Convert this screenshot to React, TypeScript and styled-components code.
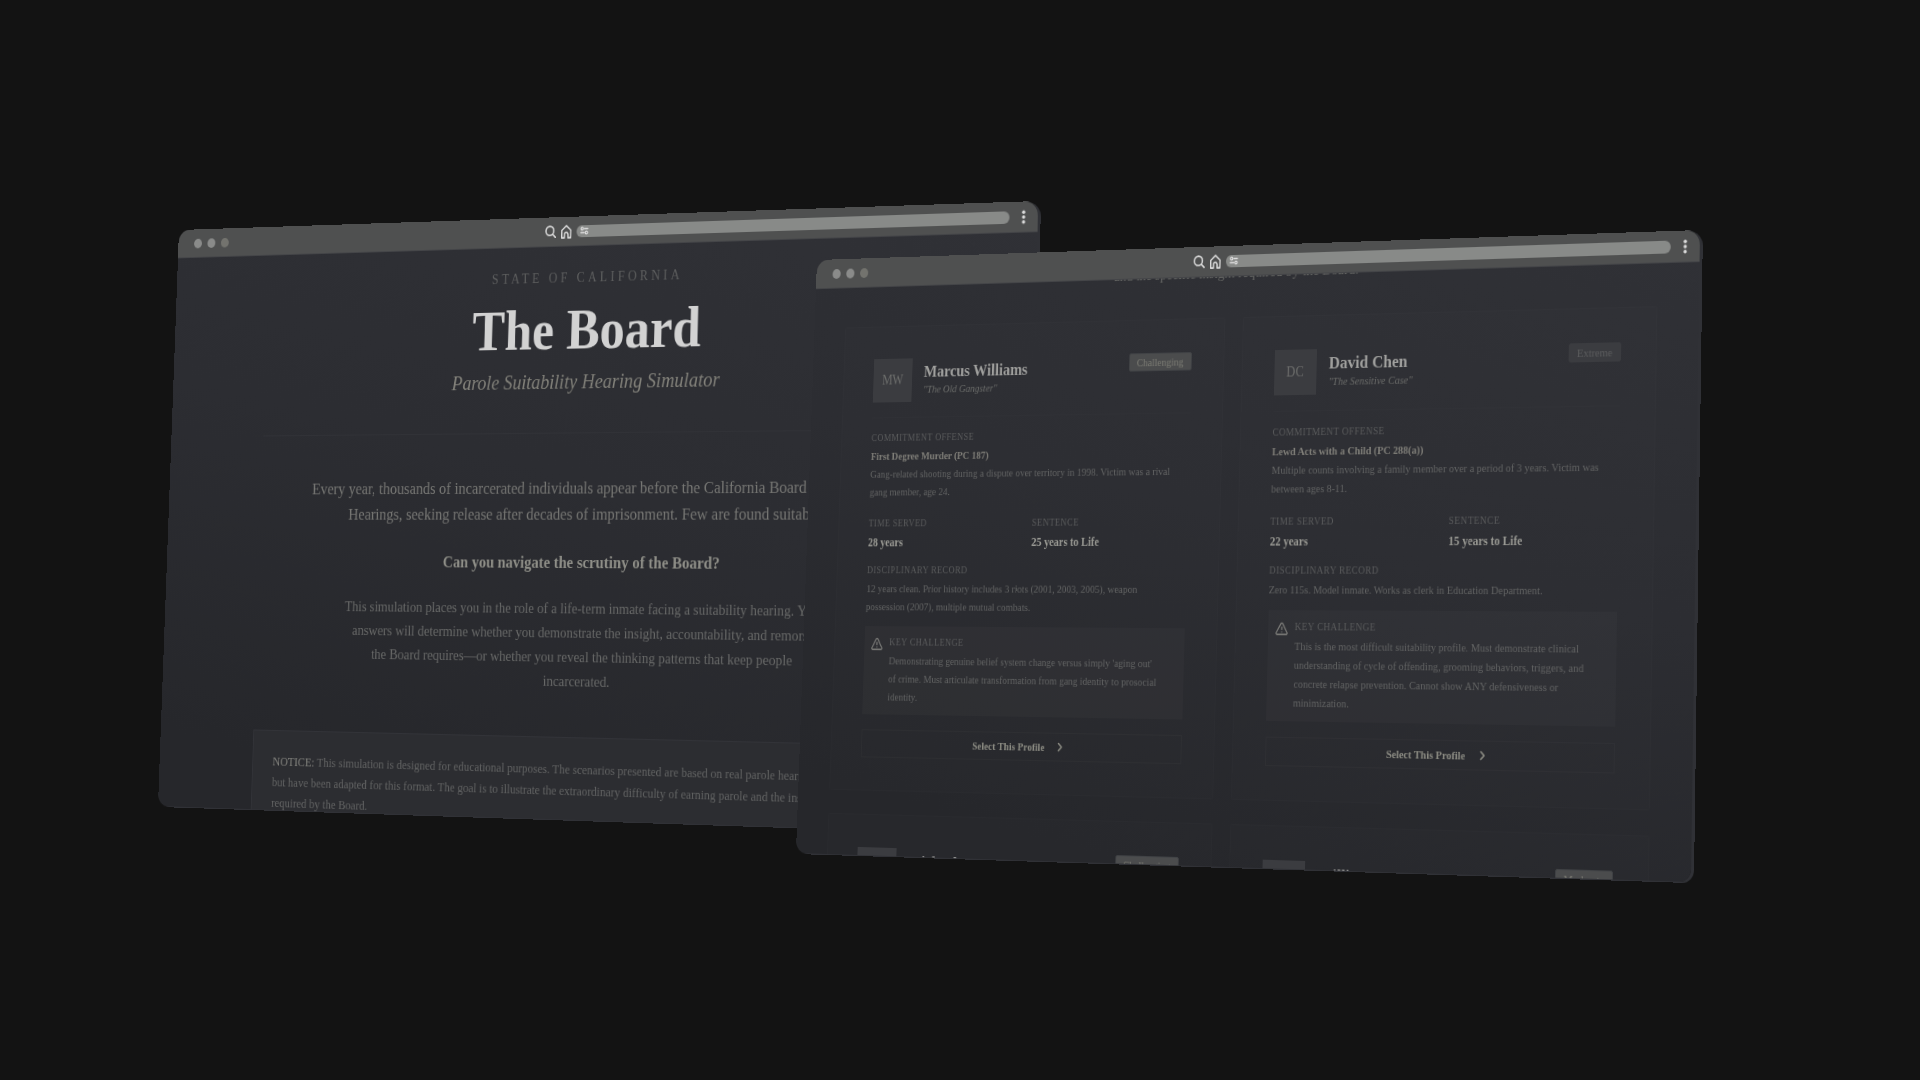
import React from "react";
import styled, { createGlobalStyle } from "styled-components";

const GlobalStyle = createGlobalStyle`
  *, *::before, *::after { box-sizing: border-box; }
  html, body { margin: 0; background: #131313; }
  body { font-family: "Liberation Serif", "Times New Roman", serif; overflow: hidden; }
  h1, h2, h3, p, dl, dt, dd { margin: 0; }
  button, input { font-family: inherit; }
`;

type Point = [number, number];
type Quad = [Point, Point, Point, Point];

const WINDOW_WIDTH = 1000;
const WINDOW_HEIGHT = 600;

/* Perspective matrix that lays a w x h plane on four corners: TL, TR, BR, BL. */
function project(w: number, h: number, [p0, p1, p2, p3]: Quad): string {
  const dx1 = p1[0] - p2[0];
  const dx2 = p3[0] - p2[0];
  const dx3 = p0[0] - p1[0] + p2[0] - p3[0];
  const dy1 = p1[1] - p2[1];
  const dy2 = p3[1] - p2[1];
  const dy3 = p0[1] - p1[1] + p2[1] - p3[1];
  const det = dx1 * dy2 - dx2 * dy1;
  const g = (dx3 * dy2 - dx2 * dy3) / det;
  const k = (dx1 * dy3 - dx3 * dy1) / det;
  const a = p1[0] - p0[0] + g * p1[0];
  const b = p3[0] - p0[0] + k * p3[0];
  const d = p1[1] - p0[1] + g * p1[1];
  const e = p3[1] - p0[1] + k * p3[1];
  const m = [
    a / w, d / w, 0, g / w,
    b / h, e / h, 0, k / h,
    0, 0, 1, 0,
    p0[0], p0[1], 0, 1,
  ];
  return `matrix3d(${m.map((n) => n.toFixed(9)).join(",")})`;
}

const Desk = styled.main`
  min-height: 100vh;
  display: grid;
  place-items: center;
  background: #131313;
`;

const Stage = styled.div`
  position: relative;
  width: 1604px;
  height: 680px;
`;

const Frame = styled.section<{ $corners: Quad }>`
  position: absolute;
  top: 0;
  left: 0;
  width: ${WINDOW_WIDTH}px;
  height: ${WINDOW_HEIGHT}px;
  display: flex;
  flex-direction: column;
  overflow: hidden;
  border-radius: 14px 14px 12px 12px;
  background: linear-gradient(192deg, #303136 0%, #2c2d32 45%, #26272b 90%);
  box-shadow: 3px 1px 0 #303136;
  transform-origin: 0 0;
  transform: ${(p) => project(WINDOW_WIDTH, WINDOW_HEIGHT, p.$corners)};
`;

const Chrome = styled.header`
  flex: none;
  height: 30px;
  display: flex;
  align-items: center;
  gap: 5px;
  padding: 0 10px 0 20px;
  background: #4f5050;
  border-bottom: 1px solid #444548;
  position: relative;
`;

const Lights = styled.div`
  flex: 1;
  display: flex;
  gap: 7px;
`;

const Light = styled.span<{ $dim?: boolean }>`
  width: 10px;
  height: 10px;
  border-radius: 50%;
  background: ${(p) => (p.$dim ? "#73736e" : "#8a8b8a")};
`;

const IconButton = styled.button<{ $width: number }>`
  width: ${(p) => p.$width}px;
  height: 20px;
  display: grid;
  place-items: center;
  padding: 0;
  border: 0;
  background: none;
  color: #dcdcdc;
`;

const Address = styled.label`
  flex: 0 0 483px;
  height: 12px;
  display: flex;
  align-items: center;
  gap: 4px;
  padding: 0 4px;
  margin-right: 5px;
  border-radius: 6px;
  background: #888a88;
  color: #dcdcdc;
`;

const AddressInput = styled.input`
  flex: 1;
  min-width: 0;
  height: 12px;
  padding: 0;
  border: 0;
  outline: 0;
  background: none;
  color: #dcdcdc;
  font-size: 10px;
`;

const Viewport = styled.div`
  flex: 1;
  min-height: 0;
  overflow: hidden;
`;

/* ---------- Intro page ---------- */

const Intro = styled.div`
  width: 768px;
  margin: 0 auto;
  padding-top: 22px;
  text-align: center;
`;

const Masthead = styled.div`
  padding-bottom: 39px;
  border-bottom: 1px solid #313237;
`;

const Eyebrow = styled.p`
  font-size: 14px;
  line-height: 20px;
  letter-spacing: 0.27em;
  color: #5e5f5f;
`;

const Title = styled.h1`
  margin-top: 10px;
  font-size: 58px;
  line-height: 64px;
  font-weight: 700;
  color: #d2d2d2;
`;

const Subtitle = styled.p`
  margin-top: 8px;
  font-size: 21px;
  line-height: 24px;
  font-style: italic;
  color: #82817a;
`;

const Lead = styled.p`
  margin-top: 42px;
  font-size: 17px;
  line-height: 26px;
  color: #777774;
`;

const Question = styled.p`
  margin-top: 22px;
  font-size: 17px;
  line-height: 26px;
  font-weight: 700;
  color: #8f8f88;
`;

const Body = styled.p`
  margin-top: 20px;
  font-size: 15px;
  line-height: 24px;
  color: #686968;
`;

const Notice = styled.aside`
  margin-top: 43px;
  padding: 20px 24px;
  border: 1px solid #323338;
  background: #2c2d31;
  text-align: left;
  white-space: nowrap;
  font-size: 13px;
  line-height: 21px;
  color: #626363;
`;

const NoticeTag = styled.strong`
  font-weight: 400;
  color: #84847f;
`;

/* ---------- Profiles page ---------- */

const Profiles = styled.div`
  padding: 0 43px 0 38px;
`;

const Caption = styled.p`
  margin-top: -14px;
  font-size: 15px;
  line-height: 20px;
  text-align: center;
  color: #686966;
`;

const Grid = styled.div`
  margin-top: 34px;
  display: grid;
  grid-template-columns: 1fr 1fr;
  gap: 23px 20px;
`;

const Card = styled.article`
  padding: 32px 36px;
  border: 1px solid rgba(255, 255, 255, 0.012);
  border-radius: 2px;
  background: rgba(255, 255, 255, 0.008);
  font-size: 11px;
  line-height: 18px;
  color: #626363;
`;

const CardHead = styled.div`
  display: flex;
  align-items: flex-start;
  gap: 14px;
  padding-bottom: 15px;
  margin-bottom: 13px;
  border-bottom: 1px solid rgba(255, 255, 255, 0.01);
`;

const Avatar = styled.div`
  width: 47px;
  height: 44px;
  display: grid;
  place-items: center;
  background: #3b3c40;
  font-size: 14px;
  color: #6c6d6b;
`;

const Identity = styled.div`
  flex: 1;
  padding-top: 4px;
`;

const Name = styled.h2`
  font-size: 17px;
  line-height: 20px;
  font-weight: 700;
  color: #a0a09e;
`;

const Alias = styled.p`
  font-size: 11px;
  line-height: 14px;
  font-style: italic;
  color: #6a6b69;
`;

const Badge = styled.span<{ $quiet?: boolean }>`
  padding: 0 8px;
  border: 1px solid ${(p) => (p.$quiet ? "#3b3c40" : "#414346")};
  border-radius: 2px;
  background: ${(p) => (p.$quiet ? "#3b3c40" : "#4b4c4d")};
  font-size: 11px;
  line-height: 16px;
  color: ${(p) => (p.$quiet ? "#5c5d5e" : "#7c7c74")};
`;

const Label = styled.h3`
  font-size: 10px;
  line-height: 14px;
  font-weight: 400;
  letter-spacing: 0.05em;
  text-transform: uppercase;
  color: #5a5b5c;
`;

const Offense = styled.p`
  margin-top: 2px;
  font-weight: 700;
  color: #807f79;
`;

const Facts = styled.dl`
  margin: 16px 0 12px;
  display: grid;
  grid-template-columns: 1fr 1fr;
  gap: 16px;
`;

const Value = styled.dd`
  margin-top: 3px;
  font-size: 12px;
  font-weight: 700;
  color: #9a9a94;
`;

const Text = styled.p<{ $spaced?: boolean }>`
  margin-top: ${(p) => (p.$spaced ? 2 : 0)}px;
  white-space: nowrap;
`;

const Challenge = styled.div`
  margin-top: 11px;
  padding: 9px 8px;
  display: flex;
  gap: 8px;
  background: rgba(255, 255, 255, 0.024);
`;

const WarnSlot = styled.span`
  display: flex;
  padding-top: 2px;
  color: #7c7c79;
`;

const SelectButton = styled.button`
  width: 100%;
  height: 28px;
  margin-top: 15px;
  display: flex;
  align-items: center;
  justify-content: center;
  gap: 12px;
  padding: 0;
  border: 1px solid rgba(255, 255, 255, 0.025);
  background: none;
  font-size: 11px;
  font-weight: 700;
  color: #8d8d84;
`;

/* ---------- Icons ---------- */

const SearchIcon = () => (
  <svg width="13" height="13" viewBox="0 0 24 24" fill="none" stroke="currentColor" strokeWidth="3" strokeLinecap="round">
    <circle cx="10.5" cy="10.5" r="8.5" />
    <path d="M17 17l5.5 5.5" />
  </svg>
);

const HomeIcon = () => (
  <svg width="14" height="14" viewBox="0 0 24 24" fill="none" stroke="currentColor" strokeWidth="2.6" strokeLinejoin="round">
    <path d="M3 9.500L12 1.500l9 8v13h-5.500v-6a3.500 3.500 0 0 0-7 0v6H3z" />
  </svg>
);

const TuneIcon = () => (
  <svg width="10" height="9" viewBox="0 0 20 18" fill="none" stroke="currentColor" strokeWidth="2.600" strokeLinecap="round">
    <circle cx="5" cy="5" r="2.700" />
    <path d="M10 5h8M2 13h8" />
    <circle cx="15" cy="13" r="2.700" />
  </svg>
);

const MenuIcon = () => (
  <svg width="4" height="14" viewBox="0 0 4 14" fill="currentColor">
    <circle cx="2" cy="2.200" r="1.700" />
    <circle cx="2" cy="7" r="1.700" />
    <circle cx="2" cy="11.800" r="1.700" />
  </svg>
);

const WarnIcon = () => (
  <svg width="14" height="14" viewBox="0 0 24 24" fill="none" stroke="currentColor" strokeWidth="2.200" strokeLinecap="round" strokeLinejoin="round">
    <path d="M10.300 3.200L1.800 18a2 2 0 0 0 1.700 3h17a2 2 0 0 0 1.700-3L13.700 3.200a2 2 0 0 0-3.400 0z" />
    <path d="M12 9v4M12 17h.01" />
  </svg>
);

const ChevronIcon = () => (
  <svg width="12" height="12" viewBox="0 0 24 24" fill="none" stroke="currentColor" strokeWidth="3.200" strokeLinecap="round" strokeLinejoin="round">
    <path d="M9 5l7 7-7 7" />
  </svg>
);

/* ---------- Browser window ---------- */

function BrowserWindow({ corners, label, children }: { corners: Quad; label: string; children: React.ReactNode }) {
  return (
    <Frame $corners={corners} aria-label={label}>
      <Chrome>
        <Lights>
          <Light />
          <Light />
          <Light $dim />
        </Lights>
        <IconButton type="button" $width={13} aria-label="Search"><SearchIcon /></IconButton>
        <IconButton type="button" $width={14} aria-label="Home"><HomeIcon /></IconButton>
        <Address>
          <TuneIcon />
          <AddressInput type="text" aria-label="Address" />
        </Address>
        <IconButton type="button" $width={10} aria-label="Menu"><MenuIcon /></IconButton>
      </Chrome>
      <Viewport>{children}</Viewport>
    </Frame>
  );
}

interface Profile {
  initials: string;
  name: string;
  alias: string;
  level: string;
  quiet?: boolean;
  offense: string;
  summary: string[];
  served: string;
  sentence: string;
  record: string[];
  challenge: string[];
}

const profiles: Profile[] = [
  {
    initials: "MW",
    name: "Marcus Williams",
    alias: "\"The Old Gangster\"",
    level: "Challenging",
    offense: "First Degree Murder (PC 187)",
    summary: ["Gang-related shooting during a dispute over territory in 1998. Victim was a rival", "gang member, age 24."],
    served: "28 years",
    sentence: "25 years to Life",
    record: ["12 years clean. Prior history includes 3 riots (2001, 2003, 2005), weapon", "possession (2007), multiple mutual combats."],
    challenge: ["Demonstrating genuine belief system change versus simply 'aging out'", "of crime. Must articulate transformation from gang identity to prosocial", "identity."],
  },
  {
    initials: "DC",
    name: "David Chen",
    alias: "\"The Sensitive Case\"",
    level: "Extreme",
    quiet: true,
    offense: "Lewd Acts with a Child (PC 288(a))",
    summary: ["Multiple counts involving a family member over a period of 3 years. Victim was", "between ages 8-11."],
    served: "22 years",
    sentence: "15 years to Life",
    record: ["Zero 115s. Model inmate. Works as clerk in Education Department."],
    challenge: ["This is the most difficult suitability profile. Must demonstrate clinical", "understanding of cycle of offending, grooming behaviors, triggers, and", "concrete relapse prevention. Cannot show ANY defensiveness or", "minimization."],
  },
];

const upcoming = [
  { name: "Michael Torres", level: "Challenging" },
  { name: "William Foster", level: "Moderate" },
];

function Lines({ lines, spaced }: { lines: string[]; spaced?: boolean }) {
  return (
    <Text $spaced={spaced}>
      {lines.map((line, i) => (
        <React.Fragment key={line}>
          {i > 0 && <br />}
          {line}
        </React.Fragment>
      ))}
    </Text>
  );
}

function ProfileCard({ profile }: { profile: Profile }) {
  return (
    <Card>
      <CardHead>
        <Avatar>{profile.initials}</Avatar>
        <Identity>
          <Name>{profile.name}</Name>
          <Alias>{profile.alias}</Alias>
        </Identity>
        <Badge $quiet={profile.quiet}>{profile.level}</Badge>
      </CardHead>
      <Label>Commitment Offense</Label>
      <Offense>{profile.offense}</Offense>
      <Lines lines={profile.summary} />
      <Facts>
        <div>
          <Label as="dt">Time Served</Label>
          <Value>{profile.served}</Value>
        </div>
        <div>
          <Label as="dt">Sentence</Label>
          <Value>{profile.sentence}</Value>
        </div>
      </Facts>
      <Label>Disciplinary Record</Label>
      <Lines lines={profile.record} spaced />
      <Challenge>
        <WarnSlot><WarnIcon /></WarnSlot>
        <div>
          <Label>Key Challenge</Label>
          <Lines lines={profile.challenge} spaced />
        </div>
      </Challenge>
      <SelectButton type="button">
        Select This Profile
        <ChevronIcon />
      </SelectButton>
    </Card>
  );
}

const introCorners: Quad = [[21, 30], [880, 1], [871, 635], [0, 606]];
const profileCorners: Quad = [[659, 60], [1542, 30], [1533, 682], [638, 653]];

export default function App() {
  return (
    <>
      <GlobalStyle />
      <Desk>
        <Stage>
          <BrowserWindow corners={introCorners} label="The Board">
            <Intro>
              <Masthead>
                <Eyebrow>STATE OF CALIFORNIA</Eyebrow>
                <Title>The Board</Title>
                <Subtitle>Parole Suitability Hearing Simulator</Subtitle>
              </Masthead>
              <Lead>
                Every year, thousands of incarcerated individuals appear before the California Board of Parole
                <br />
                Hearings, seeking release after decades of imprisonment. Few are found suitable.
              </Lead>
              <Question>Can you navigate the scrutiny of the Board?</Question>
              <Body>
                This simulation places you in the role of a life-term inmate facing a suitability hearing. Your
                <br />
                answers will determine whether you demonstrate the insight, accountability, and remorse
                <br />
                the Board requires—or whether you reveal the thinking patterns that keep people
                <br />
                incarcerated.
              </Body>
              <Notice>
                <NoticeTag>NOTICE:</NoticeTag> This simulation is designed for educational purposes. The scenarios presented are based on real parole hearings
                <br />
                but have been adapted for this format. The goal is to illustrate the extraordinary difficulty of earning parole and the insight
                <br />
                required by the Board.
              </Notice>
            </Intro>
          </BrowserWindow>
          <BrowserWindow corners={profileCorners} label="Profiles">
            <Profiles>
              <Caption>and the specific insight required by the Board.</Caption>
              <Grid>
                {profiles.map((p) => (
                  <ProfileCard key={p.name} profile={p} />
                ))}
                {upcoming.map((p) => (
                  <Card key={p.name}>
                    <CardHead>
                      <Avatar />
                      <Identity>
                        <Name>{p.name}</Name>
                      </Identity>
                      <Badge>{p.level}</Badge>
                    </CardHead>
                  </Card>
                ))}
              </Grid>
            </Profiles>
          </BrowserWindow>
        </Stage>
      </Desk>
    </>
  );
}
